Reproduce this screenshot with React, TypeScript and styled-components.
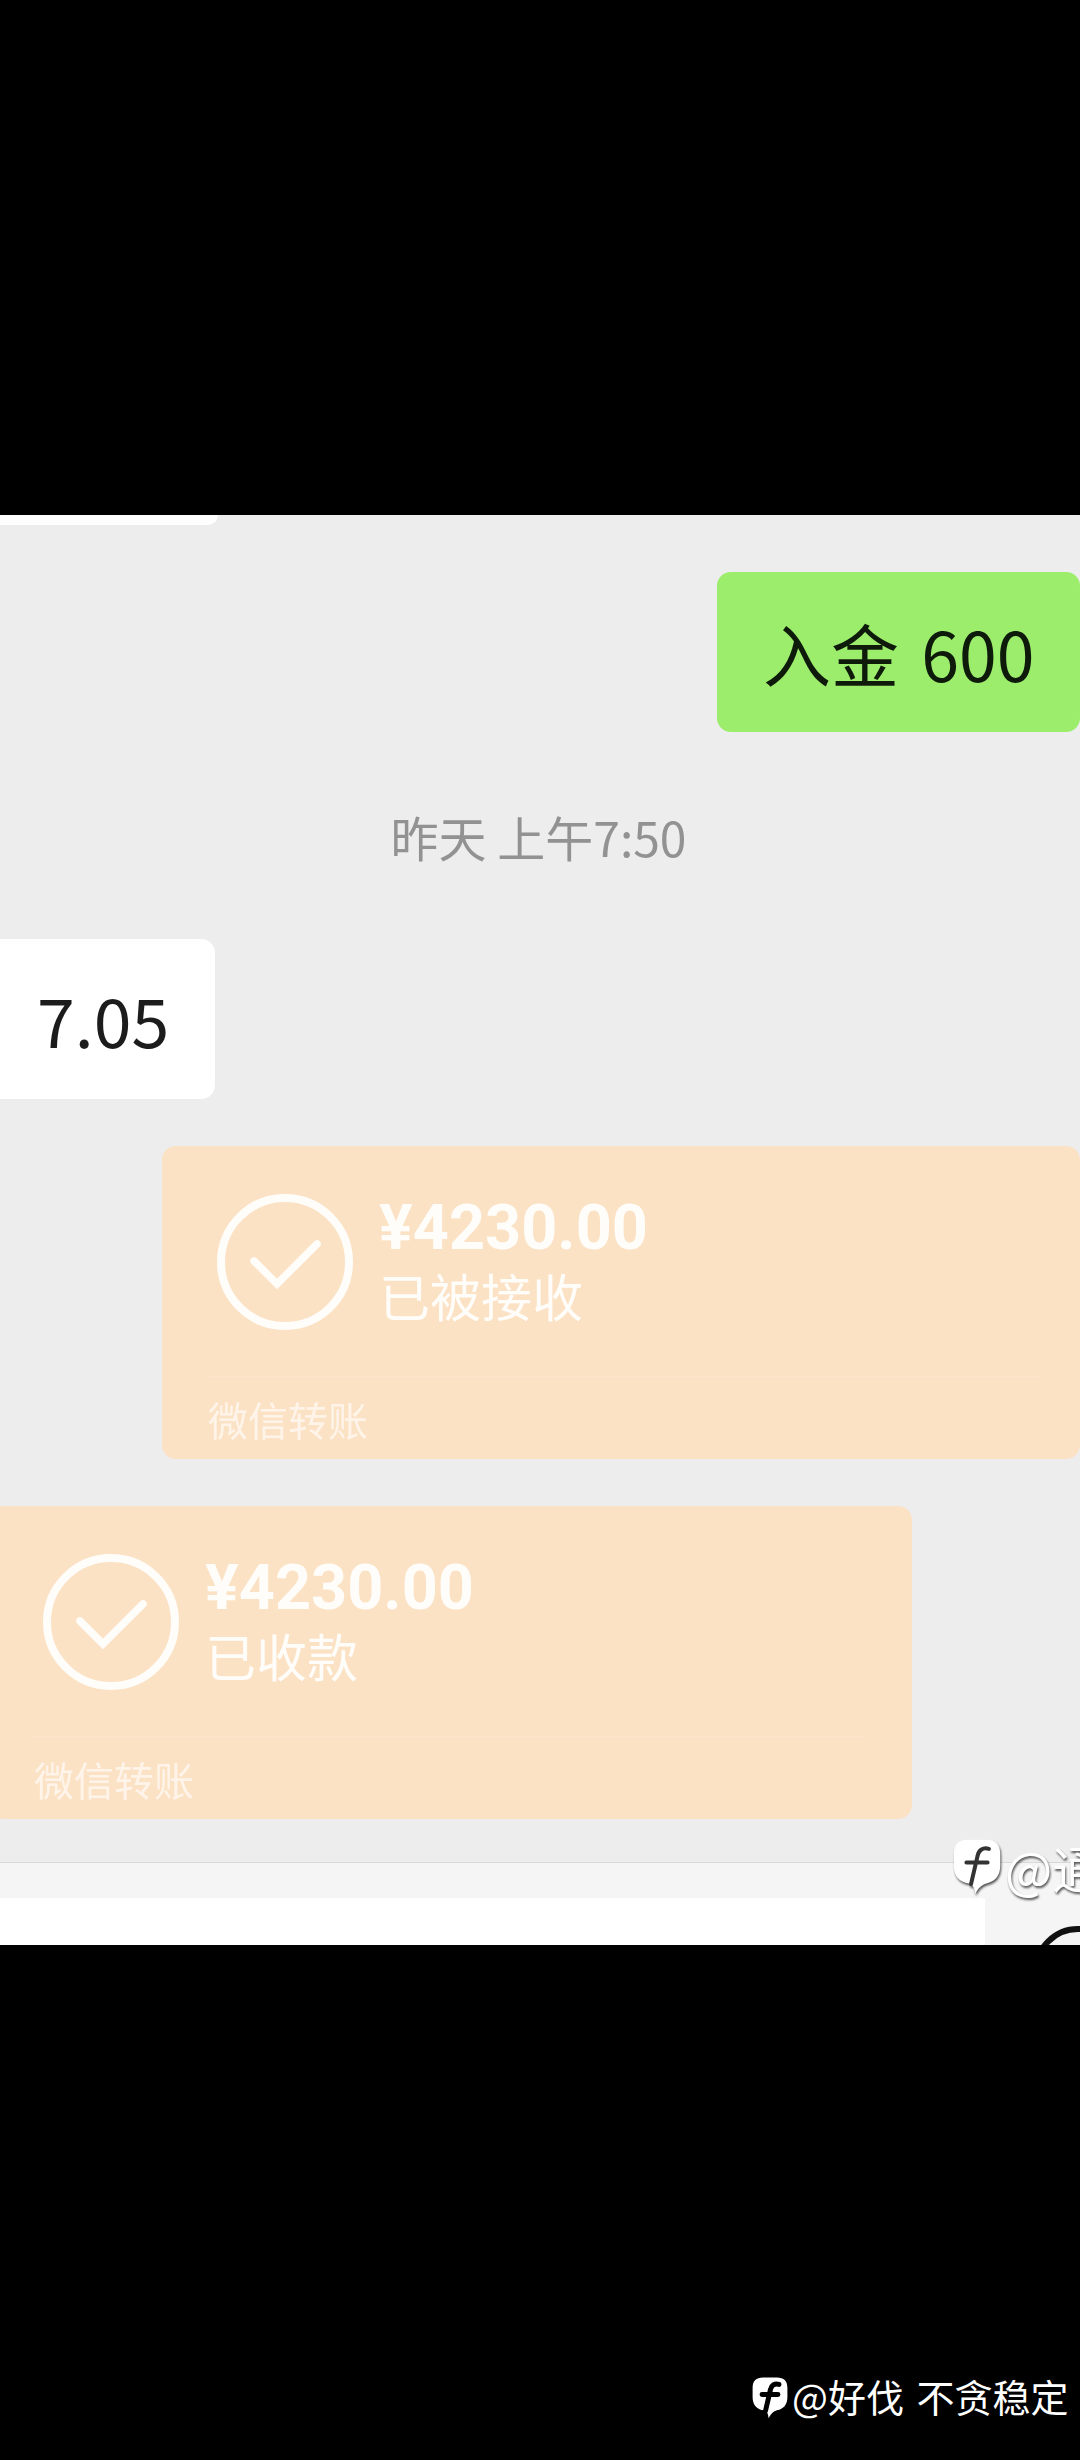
import React from 'react';
import styled, { createGlobalStyle } from 'styled-components';

const CJK = '"Noto Sans CJK SC", "Noto Sans", sans-serif';

const Global = createGlobalStyle`
  html, body {
    margin: 0;
    padding: 0;
    background: #000;
  }
  body {
    font-family: ${CJK};
  }
`;

const LogoMark = (props: { size: number; fill: string; stroke: string; weight: number }) => (
  <svg width={props.size} height={props.size * 1.16} viewBox="0 0 36 42" style={{ flexShrink: 0 }}>
    <path
      d="M11 0.5H25C32 0.5 35.5 4 35.5 11V20C35.5 28 31.5 32 25 33.5C21.5 34.5 18.5 37.5 16.5 41.5C16.5 37.5 15 34.5 12 33.5C4.5 32.5 0.5 28 0.5 20V11C0.5 4 4 0.5 11 0.5Z"
      fill={props.fill}
    />
    <path
      d="M27 7.5C22.5 6 19.3 8.5 18.5 12.5L13.5 34M10 17.7H26"
      fill="none"
      stroke={props.stroke}
      strokeWidth={props.weight}
      strokeLinecap="round"
    />
  </svg>
);

const CheckCircle = () => (
  <CheckSvg viewBox="0 0 136 136">
    <circle cx="68" cy="68" r="64" fill="none" stroke="#fffdf9" strokeWidth="8" />
    <path d="M37 67L60 90L100 50" fill="none" stroke="#fffdf9" strokeWidth="7.5" strokeLinecap="round" />
  </CheckSvg>
);

const TransferCard = (props: { status: string; offset: number; width: number; inset: number }) => (
  <Card $offset={props.offset} $width={props.width}>
    <CardBody>
      <CheckCircle />
      <CardText>
        <Amount>¥4230.00</Amount>
        <Status>{props.status}</Status>
      </CardText>
    </CardBody>
    <CardDivider $inset={props.inset} />
    <CardFooter>微信转账</CardFooter>
  </Card>
);

export default function App() {
  return (
    <>
      <Global />
      <Screen>
        <TopBlack />
        <Chat>
          <CutBubble />
          <OutBubble>入金 600</OutBubble>
          <TimeLabel>昨天 上午7:50</TimeLabel>
          <InBubble>7.05</InBubble>
          <TransferCard status="已被接收" offset={162} width={918} inset={40} />
          <TransferCard status="已收款" offset={-12} width={924} inset={49} />
          <InputBar>
            <InputField />
            <VoiceButton />
          </InputBar>
          <ChatMark>
            <LogoMark size={48} fill="#fff" stroke="#333" weight={3} />
            <ChatMarkText>@通</ChatMarkText>
          </ChatMark>
        </Chat>
        <BottomBlack>
          <LogoMark size={36} fill="#fff" stroke="#000" weight={5} />
          <BottomMarkText>@好伐 不贪稳定</BottomMarkText>
        </BottomBlack>
      </Screen>
    </>
  );
}

const Screen = styled.div`
  width: 1080px;
  height: 2460px;
  display: flex;
  flex-direction: column;
  overflow: hidden;
  background: #000;
`;

const TopBlack = styled.div`
  height: 515px;
  flex-shrink: 0;
`;

const Chat = styled.div`
  position: relative;
  height: 1430px;
  flex-shrink: 0;
  display: flex;
  flex-direction: column;
  align-items: flex-start;
  overflow: hidden;
  background: #ededed;
  filter: blur(0.5px);
`;

const CutBubble = styled.div`
  width: 218px;
  height: 10px;
  flex-shrink: 0;
  background: #fff;
  border-radius: 0 0 14px 0;
`;

const OutBubble = styled.div`
  align-self: flex-end;
  margin-top: 47px;
  width: 317px;
  height: 160px;
  padding-left: 46px;
  flex-shrink: 0;
  display: flex;
  align-items: center;
  background: #9ced6c;
  border-radius: 14px;
  color: #0e1a0a;
  font-size: 68px;
  word-spacing: 7px;
  white-space: pre;
`;

const TimeLabel = styled.div`
  align-self: stretch;
  margin-top: 69px;
  height: 70px;
  padding-right: 3px;
  flex-shrink: 0;
  text-align: center;
  color: #929292;
  font-size: 48px;
  line-height: 70px;
`;

const InBubble = styled.div`
  margin-top: 68px;
  width: 178px;
  height: 158px;
  padding: 0 0 2px 37px;
  flex-shrink: 0;
  display: flex;
  align-items: center;
  background: #fff;
  border-radius: 0 14px 14px 0;
  color: #1c1c1c;
  font-size: 68px;
`;

const Card = styled.div<{ $offset: number; $width: number }>`
  margin-top: 47px;
  margin-left: ${(p) => p.$offset}px;
  width: ${(p) => p.$width}px;
  height: 313px;
  padding: 48px 0 0 55px;
  box-sizing: border-box;
  flex-shrink: 0;
  background: #fce2c5;
  border-radius: 14px;
`;

const CardBody = styled.div`
  display: flex;
  align-items: center;
  gap: 26px;
`;

const CheckSvg = styled.svg`
  width: 136px;
  height: 136px;
  flex-shrink: 0;
`;

const CardText = styled.div`
  display: flex;
  flex-direction: column;
`;

const Amount = styled.div`
  color: #fffdf9;
  font-family: Roboto, sans-serif;
  font-weight: 700;
  font-size: 63px;
  line-height: 66px;
`;

const Status = styled.div`
  color: #fffdf9;
  font-size: 51px;
  line-height: 68px;
`;

const CardDivider = styled.div<{ $inset: number }>`
  margin: 46px ${(p) => p.$inset}px 0 -10px;
  height: 1px;
  background: rgba(255, 255, 255, 0.12);
`;

const CardFooter = styled.div`
  margin: 17px 0 0 -9px;
  color: rgba(255, 255, 255, 0.62);
  font-size: 40px;
  line-height: 50px;
`;

const InputBar = styled.div`
  margin-top: auto;
  align-self: stretch;
  height: 83px;
  padding-top: 35px;
  box-sizing: border-box;
  flex-shrink: 0;
  display: flex;
  align-items: flex-start;
  overflow: hidden;
  background: #f5f5f5;
  border-top: 1px solid #d9d9d9;
`;

const InputField = styled.div`
  width: 985px;
  height: 48px;
  flex-shrink: 0;
  background: #fff;
`;

const VoiceButton = styled.div`
  margin: 28px 0 0 48px;
  width: 90px;
  height: 90px;
  box-sizing: border-box;
  flex-shrink: 0;
  border: 6px solid #111;
  border-radius: 50%;
`;

const ChatMark = styled.div`
  position: absolute;
  left: 953px;
  top: 1324px;
  display: flex;
  align-items: center;
  gap: 4px;
  white-space: nowrap;
  filter: drop-shadow(1px 2px 1px rgba(0, 0, 0, 0.65));
`;

const ChatMarkText = styled.span`
  color: #fff;
  font-size: 50px;
  line-height: 52px;
`;

const BottomBlack = styled.div`
  flex: 1;
  display: flex;
  align-items: flex-start;
  gap: 4px;
  padding: 435px 0 0 752px;
  margin-top: -3px;
`;

const BottomMarkText = styled.span`
  margin-top: -6px;
  color: #fff;
  font-size: 38px;
  line-height: 50px;
  word-spacing: 4px;
  white-space: pre;
`;
